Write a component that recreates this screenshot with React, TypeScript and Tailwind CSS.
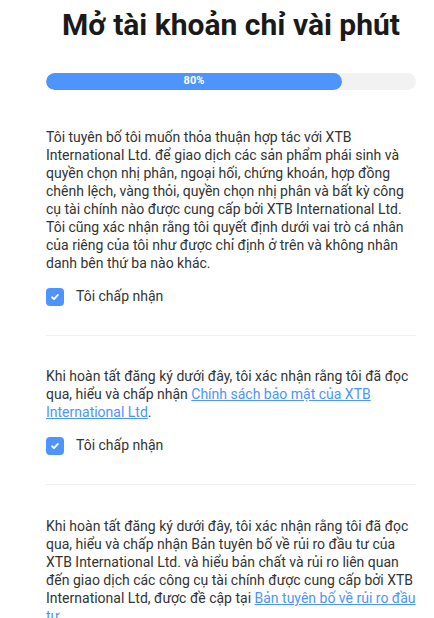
import React, { useState } from 'react'

function Consent({ checked, onToggle }: { checked: boolean; onToggle: () => void }) {
    return (
        <label className='flex items-center gap-[12px] cursor-pointer select-none' onClick={onToggle}>
            <span className={`w-[18px] h-[18px] rounded-[4px] flex items-center justify-center ${checked ? 'bg-[#4d94ff]' : 'border border-gray-300 bg-white'}`}>
                {checked && (
                    <svg viewBox="0 0 12 12" className="w-[10px] h-[10px]" fill="none" stroke="white" strokeWidth="2.2" strokeLinecap="round" strokeLinejoin="round">
                        <path d="M2.5 6.3l2.3 2.2 4.7-5" />
                    </svg>
                )}
            </span>
            <span className='text-[14px] text-[#333]'>Tôi chấp nhận</span>
        </label>
    )
}

export default function App() {
    const [first, setFirst] = useState(true)
    const [second, setSecond] = useState(true)

    return (
        <div className='min-h-screen bg-white font-["Roboto",sans-serif] text-[#333]'>
            <div className='pl-[46px] pr-[18px]'>
                <h1 className='text-center text-[30px] font-bold text-[#1a1a1a] leading-[34px] pt-[8px]'>
                    Mở tài khoản chỉ vài phút
                </h1>

                <div className='mt-[31px] h-[17px] rounded-full bg-[#f2f2f2] overflow-hidden'>
                    <div className='h-full w-[80%] rounded-full bg-[#4d94ff] flex items-center justify-center text-white text-[11px] font-bold'>
                        80%
                    </div>
                </div>

                <div className='pt-[38px] pb-[28px] border-b border-[#f0f0f0]'>
                    <p className='text-[14px] leading-[18px]'>
                        Tôi tuyên bố tôi muốn thỏa thuận hợp tác với XTB International Ltd. để giao dịch các sản phẩm phái sinh và quyền chọn nhị phân, ngoại hối, chứng khoán, hợp đồng chênh lệch, vàng thỏi, quyền chọn nhị phân và bất kỳ công cụ tài chính nào được cung cấp bởi XTB International Ltd. Tôi cũng xác nhận rằng tôi quyết định dưới vai trò cá nhân của riêng của tôi như được chỉ định ở trên và không nhân danh bên thứ ba nào khác.
                    </p>
                    <div className='mt-[14px]'>
                        <Consent checked={first} onToggle={() => setFirst(!first)} />
                    </div>
                </div>

                <div className='pt-[31px] pb-[28px] border-b border-[#f0f0f0]'>
                    <p className='text-[14px] leading-[18px]'>
                        Khi hoàn tất đăng ký dưới đây, tôi xác nhận rằng tôi đã đọc qua, hiểu và chấp nhận{' '}
                        <a href="#" className='text-[#4d94ff] underline'>Chính sách bảo mật của XTB International Ltd</a>.
                    </p>
                    <div className='mt-[14px]'>
                        <Consent checked={second} onToggle={() => setSecond(!second)} />
                    </div>
                </div>

                <div className='pt-[32px]'>
                    <p className='text-[14px] leading-[18px]'>
                        Khi hoàn tất đăng ký dưới đây, tôi xác nhận rằng tôi đã đọc qua, hiểu và chấp nhận Bản tuyên bố về rủi ro đầu tư của XTB International Ltd. và hiểu bản chất và rủi ro liên quan đến giao dịch các công cụ tài chính được cung cấp bởi XTB International Ltd, được đề cập tại{' '}
                        <a href="#" className='text-[#4d94ff] underline'>Bản tuyên bố về rủi ro đầu tư</a>.
                    </p>
                </div>
            </div>
        </div>
    )
}
